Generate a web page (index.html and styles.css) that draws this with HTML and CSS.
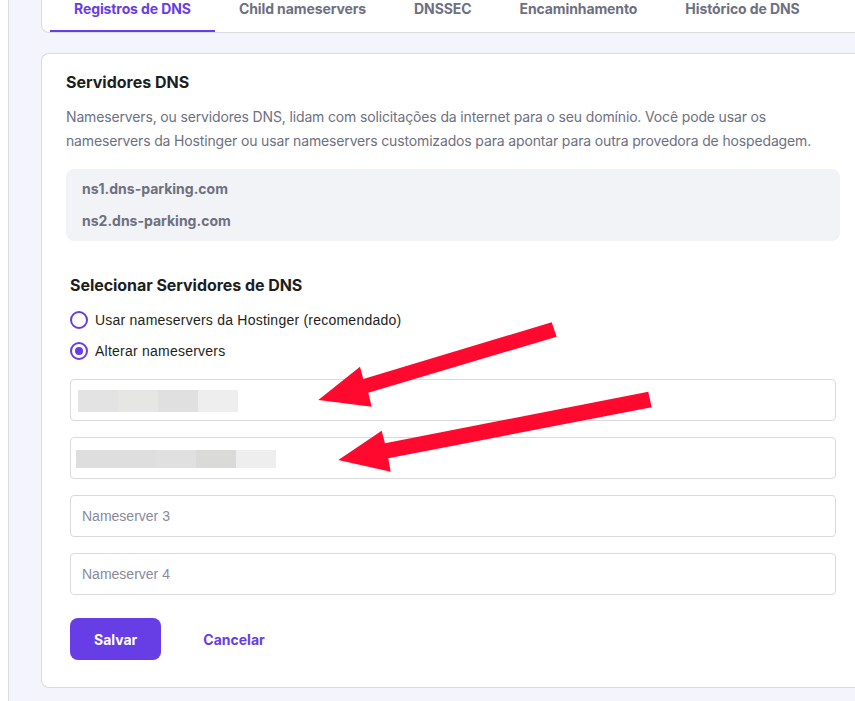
FILE: index.html
```html
<!DOCTYPE html>
<html lang="pt-BR">
<head>
<meta charset="utf-8">
<title>Servidores DNS</title>
<link rel="stylesheet" href="styles.css">
</head>
<body>
<div class="layout">
  <aside class="sidebar"></aside>
  <main class="content">
    <nav class="tabs">
      <a class="tab active">Registros de DNS</a>
      <a class="tab">Child nameservers</a>
      <a class="tab">DNSSEC</a>
      <a class="tab">Encaminhamento</a>
      <a class="tab">Histórico de DNS</a>
    </nav>
    <section class="card">
      <h2 class="title">Servidores DNS</h2>
      <p class="desc">Nameservers, ou servidores DNS, lidam com solicitações da internet para o seu domínio. Você pode usar os<br>nameservers da Hostinger ou usar nameservers customizados para apontar para outra provedora de hospedagem.</p>
      <div class="ns-box">
        <div class="ns">ns1.dns-parking.com</div>
        <div class="ns">ns2.dns-parking.com</div>
      </div>
      <div class="select">
        <h3 class="subtitle">Selecionar Servidores de DNS</h3>
        <div class="radios">
          <label class="radio"><span class="dot"></span>Usar nameservers da Hostinger (recomendado)</label>
          <label class="radio"><span class="dot checked"></span>Alterar nameservers</label>
        </div>
        <div class="fields">
          <div class="field">
            <div class="redacted r1"><span class="px c1"></span><span class="px c2"></span><span class="px c3"></span><span class="px c4"></span></div>
          </div>
          <div class="field">
            <div class="redacted r2"><span class="px c5"></span><span class="px c5"></span><span class="px c3"></span><span class="px c6"></span><span class="px c4"></span></div>
          </div>
          <input class="field input" placeholder="Nameserver 3">
          <input class="field input" placeholder="Nameserver 4">
        </div>
        <div class="actions">
          <button class="btn primary">Salvar</button>
          <button class="btn link">Cancelar</button>
        </div>
      </div>
    </section>
  </main>
</div>
<svg class="arrows" width="855" height="701" viewBox="0 0 855 701">
  <polygon fill="#ff0a2e" points="551.7,322.3 363.3,379 360,366.7 318.3,400 371.7,406.7 368.3,392.7 556.7,336.7"/>
  <polygon fill="#ff0a2e" points="648.3,391.7 385,443.3 381.7,430.7 338.3,460 390.7,471.7 388.3,458.3 651.7,407.3"/>
</svg>
</body>
</html>
```
FILE: styles.css
```css
html, body {
  margin: 0;
  padding: 0;
  overflow: hidden;
  height: 100%;
}
body {
  background: #f4f4fc;
  font-family: Inter, "Noto Sans", sans-serif;
  color: #1d1e20;
  position: relative;
}
.layout {
  display: flex;
  min-height: 100%;
}
.sidebar {
  width: 8px;
  flex: 0 0 8px;
  background: #ffffff;
  border-right: 1px solid #dadce0;
}
.content {
  flex: 0 0 auto;
  width: 825px;
  padding-left: 32px;
}
.tabs {
  display: flex;
  background: #ffffff;
  border: 1px solid #dadce0;
  border-top: none;
  border-right: none;
  border-radius: 0 0 0 8px;
  margin-top: -16px;
  padding-left: 8px;
}
.tab {
  height: 48px;
  display: flex;
  align-items: center;
  padding: 0 24px;
  font-size: 14px;
  font-weight: 700;
  color: #6d7081;
  letter-spacing: -0.1px;
  box-sizing: border-box;
}
.tab.active {
  color: #673de6;
  box-shadow: inset 0 -2px 0 #673de6;
}
.card {
  margin-top: 20px;
  background: #ffffff;
  border: 1px solid #dadce0;
  border-right: none;
  border-radius: 8px 0 0 8px;
  padding: 16px 24px 27px 24px;
}
.title {
  margin: 0;
  font-size: 16px;
  line-height: 24px;
  font-weight: 700;
}
.desc {
  margin: 11px 0 0;
  font-size: 14px;
  line-height: 24px;
  color: #6d7081;
  letter-spacing: -0.15px;
}
.ns-box {
  margin-top: 16px;
  width: 774px;
  background: #f2f3f6;
  border-radius: 8px;
  padding: 8px 16px;
  box-sizing: border-box;
  display: flex;
  flex-direction: column;
  gap: 8px;
}
.ns {
  font-size: 14px;
  line-height: 24px;
  font-weight: 700;
  color: #6d7081;
}
.select {
  width: 766px;
  padding: 0 4px;
  margin-top: 32px;
}
.subtitle {
  margin: 0;
  font-size: 16px;
  line-height: 24px;
  font-weight: 700;
  letter-spacing: -0.05px;
}
.radios {
  margin-top: 11px;
  display: flex;
  flex-direction: column;
  gap: 7px;
}
.radio {
  display: flex;
  align-items: center;
  gap: 7px;
  height: 24px;
  font-family: "Liberation Sans", Arial, sans-serif;
  font-size: 14px;
  letter-spacing: 0.23px;
  color: #1d1e20;
}
.dot {
  width: 18px;
  height: 18px;
  border: 2px solid #673de6;
  border-radius: 50%;
  box-sizing: border-box;
  display: flex;
  align-items: center;
  justify-content: center;
}
.dot.checked::after {
  content: "";
  width: 8px;
  height: 8px;
  border-radius: 50%;
  background: #673de6;
}
.fields {
  margin-top: 16px;
  display: flex;
  flex-direction: column;
  gap: 16px;
}
.field {
  height: 42px;
  border: 1px solid #dadada;
  border-radius: 4px;
  box-sizing: border-box;
  background: #ffffff;
  display: flex;
  align-items: center;
  width: 100%;
}
.input {
  padding: 0 11px;
  font-family: "Liberation Sans", Arial, sans-serif;
  font-size: 14px;
  color: #1d1e20;
  outline: none;
}
.input::placeholder {
  color: #878a99;
}
.redacted {
  display: flex;
}
.r1 {
  margin-left: 7px;
  margin-top: 2px;
}
.r1 .px {
  height: 22px;
}
.r2 {
  margin-left: 5px;
  margin-top: 2px;
}
.r2 .px {
  height: 18px;
}
.px {
  width: 40px;
}
.c1 { background: #e3e3e3; }
.c2 { background: #e6e6e4; }
.c3 { background: #e0e0e0; }
.c4 { background: #eeeeee; }
.c5 { background: #dedede; }
.c6 { background: #dadad8; }
.actions {
  margin-top: 23px;
  display: flex;
  gap: 18px;
}
.btn {
  height: 42px;
  padding: 0 24px;
  border: none;
  border-radius: 8px;
  font-family: Inter, "Noto Sans", sans-serif;
  font-size: 14px;
  font-weight: 700;
  cursor: pointer;
}
.btn.primary {
  background: #673de6;
  color: #ffffff;
}
.btn.link {
  background: transparent;
  color: #673de6;
}
.arrows {
  position: absolute;
  left: 0;
  top: 0;
  pointer-events: none;
}
```
